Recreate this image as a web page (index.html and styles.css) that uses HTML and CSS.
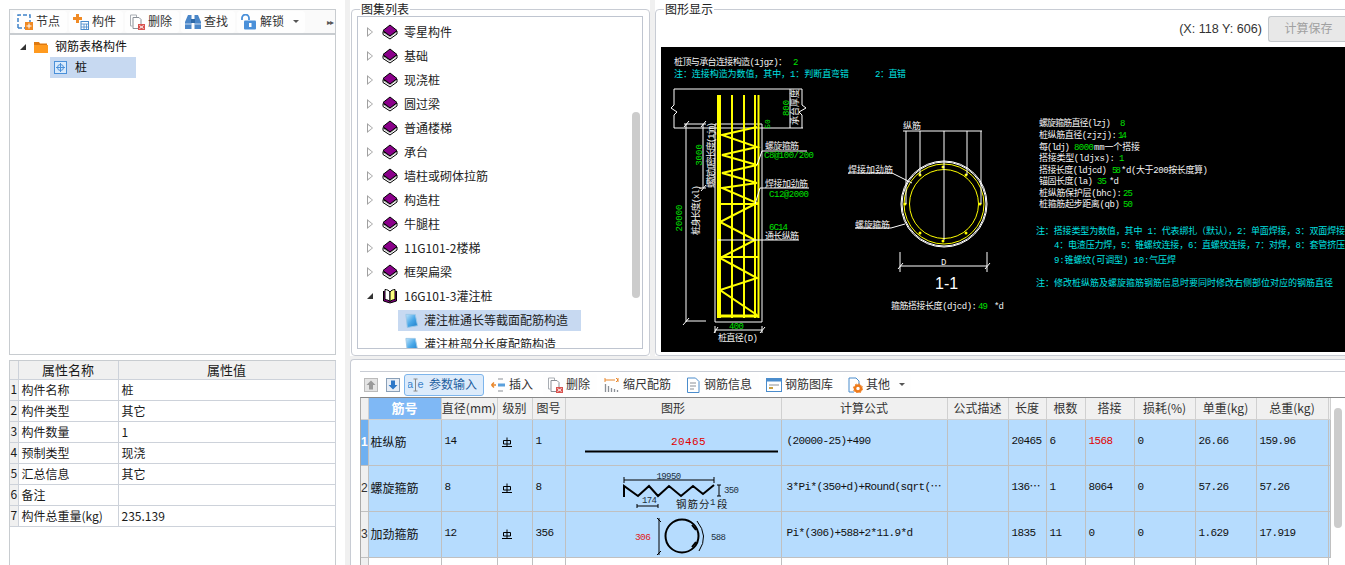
FILE: index.html
```html
<!DOCTYPE html>
<html lang="zh-CN">
<head>
<meta charset="utf-8">
<title>钢筋表格构件</title>
<link rel="stylesheet" href="styles.css">
</head>
<body>
<svg class="sprite" aria-hidden="true">
  <defs>
    <linearGradient id="paper" x1="0" y1="0" x2="1" y2="1">
      <stop offset="0" stop-color="#bfe4fb"/><stop offset=".5" stop-color="#4aa8e8"/><stop offset="1" stop-color="#1c7cc8"/>
    </linearGradient>
    <symbol id="book" viewBox="0 0 16 16">
      <path d="M1 7.500v3l7 4.500 7-5V7L8 12z" fill="#fff" stroke="#000"/>
      <path d="M1 6.500 8 1l7 5.500L8 12z" fill="#8a008a" stroke="#000"/>
      <path d="M2 9l6 4 6-4.500" fill="none" stroke="#888" stroke-width=".7"/>
    </symbol>
    <symbol id="openbook" viewBox="0 0 16 16">
      <path d="M1.500 3v10l6.500 2 6.500-2V3" fill="#800080" stroke="#000"/>
      <path d="M3 1.500c2 0 4 1 5 2.500v9.500c-1-1-3-2-5-2z" fill="#fff" stroke="#000"/>
      <path d="M13 1.500c-2 0-4 1-5 2.500v9.500c1-1 3-2 5-2z" fill="#ffff80" stroke="#000"/>
    </symbol>
    <symbol id="doc" viewBox="0 0 16 16">
      <path d="M2 1.500h10l2.500 12-11 2z" fill="url(#paper)" stroke="#9cc8e8"/>
    </symbol>
    <symbol id="grade" viewBox="0 0 12 12">
      <path d="M1 10.500h10M6 1.500v9M2.500 4.500h7v3.500h-7z" fill="none" stroke="#000"/>
    </symbol>
    <symbol id="del" viewBox="0 0 16 16">
      <path d="M4 3.500h6l2 2v5M4 3.500v11h5" fill="#fff" stroke="#8a8f96"/>
      <path d="M1.500 1v11h2M1.500 1h6v2" fill="none" stroke="#a8adb3"/>
      <rect x="9" y="10" width="7" height="6" fill="#d9534f"/>
      <path d="M10.500 11.500l4 3M14.500 11.500l-4 3" stroke="#fff"/>
    </symbol>
  </defs>
</svg>

<div class="app">
  <aside class="left">
    <div class="tbar">
      <div class="tbtn">
        <svg class="ico" viewBox="0 0 16 16"><path d="M1 14V1h12v7M1 14h7" fill="none" stroke="#3f83c9" stroke-width="1.500" stroke-dasharray="4 2"/><rect x="8" y="8" width="8" height="8" fill="#f08a24"/><path d="M12 9.500v5M9.500 12h5" stroke="#fff"/></svg>
        <span>节点</span>
      </div>
      <div class="tbtn">
        <svg class="ico" viewBox="0 0 16 16"><path d="M3 0h3v3h3v3H6v3H3V6H0V3h3z" fill="#f08a24"/><rect x="8" y="7.500" width="7.500" height="8" fill="#fff" stroke="#4a8ccc"/><path d="M8 10h8M8 13h8M11 10v6M13.500 10v6" stroke="#4a8ccc" stroke-width=".8"/></svg>
        <span>构件</span>
      </div>
      <div class="tbtn">
        <svg class="ico" viewBox="0 0 16 16"><use href="#del"/></svg>
        <span>删除</span>
      </div>
      <div class="tbtn">
        <svg class="ico" viewBox="0 0 16 16"><path d="M3 1h3.500v14H0V8zM9.500 1H13l3 7v7H9.500z" fill="#4a86c8"/><path d="M6 5h4v4H6z" fill="#2f6aa8"/><path d="M0 10h6.500M9.500 10H16" stroke="#fff" stroke-width=".7"/></svg>
        <span>查找</span>
      </div>
      <div class="tbtn">
        <svg class="ico" viewBox="0 0 16 16"><path d="M1 6V4a3.500 3.500 0 0 1 7 0v2" fill="none" stroke="#4a90d9" stroke-width="1.800"/><rect x="3" y="6.500" width="12" height="9" rx="1" fill="#4a90d9"/><rect x="8" y="9" width="2.500" height="4" fill="#fff"/></svg>
        <span>解锁</span>
        <i class="caret"></i>
      </div>
      <span class="more">▸▸</span>
    </div>

    <div class="ltree">
      <div class="lrow">
        <i class="tri-open"></i>
        <svg class="ico-folder" viewBox="0 0 14 12"><path d="M0 1h5l1 1.500h7V4H0z" fill="#e07a10"/><path d="M0 4h14v8H0z" fill="#ff9a1f"/></svg>
        <span>钢筋表格构件</span>
      </div>
      <div class="lrow lrow-sel">
        <svg class="ico-pile" viewBox="0 0 13 13"><rect x=".5" y=".5" width="12" height="12" fill="#d8eafc" stroke="#4a90d9"/><circle cx="6.500" cy="6.500" r="3" fill="none" stroke="#4a90d9"/><path d="M6.500 2v9M2 6.500h9" stroke="#4a90d9"/></svg>
        <span>桩</span>
      </div>
    </div>

    <div class="props">
      <table class="ptable">
        <colgroup><col class="pc0"><col class="pc1"><col class="pc2"></colgroup>
        <thead><tr><th></th><th>属性名称</th><th>属性值</th></tr></thead>
        <tbody>
          <tr><th>1</th><td>构件名称</td><td>桩</td></tr>
          <tr><th>2</th><td>构件类型</td><td>其它</td></tr>
          <tr><th>3</th><td>构件数量</td><td>1</td></tr>
          <tr><th>4</th><td>预制类型</td><td>现浇</td></tr>
          <tr><th>5</th><td>汇总信息</td><td>其它</td></tr>
          <tr><th>6</th><td>备注</td><td></td></tr>
          <tr><th>7</th><td>构件总重量(kg)</td><td>235.139</td></tr>
        </tbody>
      </table>
    </div>
  </aside>

  <section class="pane">
    <fieldset class="group group-mid">
      <legend>图集列表</legend>
      <div class="mtree">
        <div class="mrow"><i class="tri"></i><svg class="ico-book"><use href="#book"/></svg><span>零星构件</span></div>
        <div class="mrow"><i class="tri"></i><svg class="ico-book"><use href="#book"/></svg><span>基础</span></div>
        <div class="mrow"><i class="tri"></i><svg class="ico-book"><use href="#book"/></svg><span>现浇桩</span></div>
        <div class="mrow"><i class="tri"></i><svg class="ico-book"><use href="#book"/></svg><span>圆过梁</span></div>
        <div class="mrow"><i class="tri"></i><svg class="ico-book"><use href="#book"/></svg><span>普通楼梯</span></div>
        <div class="mrow"><i class="tri"></i><svg class="ico-book"><use href="#book"/></svg><span>承台</span></div>
        <div class="mrow"><i class="tri"></i><svg class="ico-book"><use href="#book"/></svg><span>墙柱或砌体拉筋</span></div>
        <div class="mrow"><i class="tri"></i><svg class="ico-book"><use href="#book"/></svg><span>构造柱</span></div>
        <div class="mrow"><i class="tri"></i><svg class="ico-book"><use href="#book"/></svg><span>牛腿柱</span></div>
        <div class="mrow"><i class="tri"></i><svg class="ico-book"><use href="#book"/></svg><span>11G101-2楼梯</span></div>
        <div class="mrow"><i class="tri"></i><svg class="ico-book"><use href="#book"/></svg><span>框架扁梁</span></div>
        <div class="mrow"><i class="tri-open"></i><svg class="ico-book"><use href="#openbook"/></svg><span>16G101-3灌注桩</span></div>
        <div class="mrow msub"><div class="msub-in msub-sel"><svg class="ico-doc"><use href="#doc"/></svg><span>灌注桩通长等截面配筋构造</span></div></div>
        <div class="mrow msub"><div class="msub-in"><svg class="ico-doc"><use href="#doc"/></svg><span>灌注桩部分长度配筋构造</span></div></div>
        <i class="vscroll vscroll-mid"></i>
      </div>
    </fieldset>
  </section>

  <section class="pane">
    <fieldset class="group group-right">
      <legend>图形显示</legend>
      <div class="dhead">
        <span class="coords">(X: 118 Y: 606)</span>
        <span class="savebtn">计算保存</span>
      </div>
      <svg class="canvas" viewBox="661 47 684 305">
        <text class="w" x="674" y="65" textLength="113">桩顶与承台连接构造(1jgz)：</text>
        <text class="g" x="793" y="65">2</text>
        <text class="c" x="674" y="77" textLength="175">注：连接构造为数值，其中，1：判断直弯错</text>
        <text class="c" x="875" y="77" textLength="31">2：直错</text>

        <path class="lw" d="M674 89H802M674 89V105L671 108L677 112L674 115V128M674 128H790M802 89V105L806 108L799 112L802 115V128M790 89V128H803"/>
        <path class="lw" d="M715 322V124H762V322ZM686 124V322M703 124V188M684 124H706M686 321H706M699 188H706"/>
        <path class="lw" d="M683 325L689 318M701 127L706 121M684 127L689 121M701 191L706 185"/>

        <path class="ly b4" d="M719 95V318"/>
        <path class="ly b2" d="M732 95V318M744 95V318M755 95V318M758.500 95V318"/>
        <path class="ly b2" d="M757 127L722 135L757 147L722 155L757 165L722 173L757 183L722 188L757 203L720 222L755 240L720 258L757 278L720 290L757 315M720 204H758M720 257H758"/>
        <path class="ly b3" d="M718 316H758"/>

        <text class="g rot" transform="rotate(-90 702 155)" x="702" y="155">3000</text>
        <text class="g rot" transform="rotate(-90 789 108)" x="789" y="108">800</text>
        <text class="g rot small" transform="rotate(-90 770 124)" x="770" y="124">50</text>
        <text class="w rot" transform="rotate(-90 798 107)" x="798" y="107">承台厚度</text>
        <text class="w rot" transform="rotate(-90 714 155)" x="714" y="155" textLength="66">螺旋加密长度(1jm)</text>
        <text class="w rot" transform="rotate(-90 699 210)" x="699" y="210" textLength="50">桩身长度(xl)</text>
        <text class="g rot" transform="rotate(-90 682 218)" x="682" y="218">20000</text>

        <text class="w" x="765" y="149" textLength="34">螺旋箍筋</text>
        <path class="lw" d="M762 151H807M762 151L757 165"/>
        <text class="g" x="764" y="158" textLength="50">C8@100/200</text>
        <text class="w" x="765" y="187" textLength="43">焊接加劲筋</text>
        <path class="lw" d="M760 188H809M760 188L755 204"/>
        <text class="g" x="769" y="197" textLength="40">C12@2000</text>
        <text class="g" x="769" y="230" textLength="19">6C14</text>
        <text class="w" x="765" y="239" textLength="34">通长纵筋</text>
        <path class="lw" d="M718 240H799"/>

        <text class="g" x="729" y="329" textLength="15">400</text>
        <path class="lw" d="M715 330H762M714 333L718 327M760 333L765 327M715 326V333M762 326V333"/>
        <text class="w" x="718" y="341" textLength="40">桩直径(D)</text>

        <circle class="lw" cx="944" cy="204" r="43"/>
        <circle class="lw" cx="944" cy="204" r="42"/>
        <circle class="ly" cx="944" cy="204" r="40"/>
        <circle class="ly" cx="944" cy="204" r="34.500"/>
        <g class="dots">
          <circle cx="943" cy="167" r="1.500"/><circle cx="966" cy="175" r="1.500"/><circle cx="980" cy="204" r="1.500"/><circle cx="966" cy="233" r="1.500"/>
          <circle cx="943" cy="241" r="1.500"/><circle cx="920" cy="233" r="1.500"/><circle cx="905" cy="204" r="1.500"/><circle cx="920" cy="175" r="1.500"/>
        </g>
        <path class="lw" d="M903 131H982M906 131V204M920 131V175M944 131V240M967 131V175M981 131V204"/>
        <text class="w" x="903" y="129" textLength="18">纵筋</text>
        <text class="w" x="848" y="173" textLength="45">焊接加劲筋</text>
        <path class="lw" d="M848 173H892L912 183"/>
        <text class="w" x="855" y="228" textLength="35">螺旋箍筋</text>
        <path class="lw" d="M855 228H891L905 224"/>
        <path class="lw" d="M900 252V272M987 252V272M900 266H987M898 269L903 263M985 269L990 263"/>
        <text class="w" x="941" y="265">D</text>
        <text class="big" x="935" y="289">1-1</text>
        <text class="w" x="891" y="309" textLength="86">箍筋搭接长度(djcd):</text>
        <text class="g" x="978" y="309" textLength="10">49</text>
        <text class="w" x="994" y="309" textLength="10">*d</text>

        <text class="w" x="1039" y="126" textLength="72">螺旋箍筋直径(lzj)</text><text class="g" x="1120" y="126">8</text>
        <text class="w" x="1039" y="138" textLength="78">桩纵筋直径(zjzj):</text><text class="g" x="1118" y="138" textLength="9">14</text>
        <text class="w" x="1039" y="150" textLength="31">每(ldj)</text><text class="g" x="1074" y="150" textLength="20">8000</text><text class="w" x="1094" y="150" textLength="46">mm一个搭接</text>
        <text class="w" x="1039" y="161" textLength="76">搭接类型(ldjxs):</text><text class="g" x="1119" y="161">1</text>
        <text class="w" x="1039" y="173" textLength="68">搭接长度(ldjcd)</text><text class="g" x="1112" y="173" textLength="9">58</text><text class="w" x="1121" y="173" textLength="87">*d(大于200按长度算)</text>
        <text class="w" x="1039" y="184" textLength="54">锚固长度(la)</text><text class="g" x="1097" y="184" textLength="10">35</text><text class="w" x="1109" y="184" textLength="10">*d</text>
        <text class="w" x="1039" y="196" textLength="83">桩纵筋保护层(bhc):</text><text class="g" x="1123" y="196" textLength="10">25</text>
        <text class="w" x="1039" y="207" textLength="81">桩箍筋起步距离(qb)</text><text class="g" x="1123" y="207" textLength="10">50</text>

        <text class="c" x="1036" y="234" textLength="309">注：搭接类型为数值，其中 1：代表绑扎（默认），2：单面焊接，3：双面焊接</text>
        <text class="c" x="1054" y="248" textLength="291">4：电渣压力焊，5：锥螺纹连接，6：直螺纹连接，7：对焊，8：套管挤压</text>
        <text class="c" x="1054" y="263" textLength="122">9:锥螺纹(可调型)  10:气压焊</text>
        <text class="c" x="1036" y="286" textLength="297">注：修改桩纵筋及螺旋箍筋钢筋信息时要同时修改右侧部位对应的钢筋直径</text>
      </svg>
    </fieldset>
  </section>

  <section class="bottom">
    <div class="bbar">
      <svg class="arrow" viewBox="0 0 14 14"><rect x=".5" y=".5" width="13" height="13" fill="#e4e4e4" stroke="#bbb"/><path d="M7 2.500 11.500 7H9v4.500H5V7H2.500z" fill="#9a9a9a"/></svg>
      <svg class="arrow" viewBox="0 0 14 14"><rect x=".5" y=".5" width="13" height="13" fill="#e8eef6" stroke="#8aa0b8"/><path d="M7 11.500 2.500 7H5V2.500h4V7h2.500z" fill="#2e78c8"/></svg>
      <div class="tbtn tbtn-on">
        <svg class="ico" viewBox="0 0 16 16"><text class="icotxt" x="-1" y="11">a</text><path d="M7.500 2v12M5.500 2h4M5.500 14h4" stroke="#888" fill="none"/><text class="icotxt" x="9.500" y="11">e</text></svg>
        <span class="gap5">参数输入</span>
      </div>
      <div class="tbtn">
        <svg class="ico" viewBox="0 0 16 16"><path d="M6 5H1.500M1.500 5l2.500-2.500M1.500 5l2.500 2.500" fill="none" stroke="#e8862a" stroke-width="1.500" transform="translate(0 3)"/><path d="M8 2h5M8 14h5" stroke="#8a8f96"/><rect x="8" y="6.500" width="7" height="3" fill="#5aa0dc"/></svg>
        <span>插入</span>
      </div>
      <div class="tbtn">
        <svg class="ico" viewBox="0 0 16 16"><use href="#del"/></svg>
        <span>删除</span>
      </div>
      <div class="tbtn">
        <svg class="ico" viewBox="0 0 16 16"><path d="M1 1v4M1 3h10M14 1v4" stroke="#e8862a" fill="none"/><path d="M12 1l2 2-2 2" stroke="#e8862a" fill="none"/><path d="M1.500 7v8M4.500 9v6M7.500 11v4M10.500 12v3M13.500 13v2" stroke="#8a8f96" stroke-width="1.300"/></svg>
        <span>缩尺配筋</span>
      </div>
      <div class="tbtn">
        <svg class="ico" viewBox="0 0 16 16"><path d="M2.500 1h8l3.500 3.500v11h-11.500z" fill="#fff" stroke="#4a8ccc"/><path d="M5 6h6M5 9h6M5 12h4" stroke="#8a8f96"/></svg>
        <span>钢筋信息</span>
      </div>
      <div class="tbtn">
        <svg class="ico" viewBox="0 0 16 16"><rect x=".5" y="1.500" width="15" height="13" fill="#fff" stroke="#4a8ccc"/><rect x=".5" y="1.500" width="15" height="3" fill="#4a8ccc"/><path d="M3 8h10" stroke="#8a8f96"/><path d="M3 11h4" stroke="#c8a040" stroke-width="2"/></svg>
        <span>钢筋图库</span>
      </div>
      <div class="tbtn">
        <svg class="ico" viewBox="0 0 16 16"><path d="M2 1h7l3 3v5M2 1v14h5" fill="#fff" stroke="#4a8ccc"/><circle cx="11" cy="11.500" r="3" fill="none" stroke="#ee7a1a" stroke-width="2.500"/><circle cx="11" cy="11.500" r="4.600" fill="none" stroke="#ee7a1a" stroke-dasharray="1.800 1.800"/></svg>
        <span>其他</span>
        <i class="caret"></i>
      </div>
    </div>

    <div class="gridwrap">
      <table class="grid">
        <colgroup>
          <col class="c-h"><col class="c-no"><col class="c-dia"><col class="c-lv"><col class="c-fig"><col class="c-shape"><col class="c-calc"><col class="c-desc"><col class="c-len"><col class="c-cnt"><col class="c-lap"><col class="c-loss"><col class="c-unit"><col class="c-total"><col class="c-end">
        </colgroup>
        <thead>
          <tr>
            <th class="hh"></th><th class="hsel">筋号</th><th>直径(mm)</th><th>级别</th><th>图号</th><th>图形</th><th>计算公式</th><th>公式描述</th><th>长度</th><th>根数</th><th>搭接</th><th>损耗(%)</th><th>单重(kg)</th><th>总重(kg)</th><th></th>
          </tr>
        </thead>
        <tbody>
          <tr class="on">
            <th class="rh rh-sel">1</th><td class="cn">桩纵筋</td><td>14</td><td><svg class="grade"><use href="#grade"/></svg></td><td>1</td>
            <td class="shape">
              <svg class="shape-svg" viewBox="565 419 216 45">
                <text class="sred" x="687.500" y="444" text-anchor="middle">20465</text>
                <path class="sbar" d="M584 450.500H777"/>
              </svg>
            </td>
            <td class="calc">(20000-25)+490</td><td></td><td>20465</td><td>6</td><td class="red">1568</td><td>0</td><td>26.66</td><td>159.96</td><td></td>
          </tr>
          <tr class="on">
            <th class="rh">2</th><td class="cn">螺旋箍筋</td><td>8</td><td><svg class="grade"><use href="#grade"/></svg></td><td>8</td>
            <td class="shape">
              <svg class="shape-svg" viewBox="565 465 216 45">
                <text class="stxt" x="667.500" y="478" text-anchor="middle">19950</text>
                <path class="sthin" d="M623 479H713M623 476V482M713 476V482"/>
                <path class="sthick" d="M623 496V485L637 495L648 485L657 495L668 485L680 495L692 485L702 493L713 484"/>
                <path class="sthin" d="M718 484V495M716 484H720M716 495H720"/>
                <text class="stxt" x="723" y="492">350</text>
                <text class="stxt" x="641" y="502">174</text>
                <path class="sthin" d="M636 505H657M636 503V507M657 503V507"/>
                <text class="scn" x="675" y="507">钢筋分</text><text class="stxt" x="709" y="504">1</text><text class="scn" x="716" y="507">段</text>
              </svg>
            </td>
            <td class="calc">3*Pi*(350+d)+Round(sqrt(⋯</td><td></td><td>136⋯</td><td>1</td><td>8064</td><td>0</td><td>57.26</td><td>57.26</td><td></td>
          </tr>
          <tr class="on">
            <th class="rh">3</th><td class="cn">加劲箍筋</td><td>12</td><td><svg class="grade"><use href="#grade"/></svg></td><td>356</td>
            <td class="shape">
              <svg class="shape-svg" viewBox="565 511 216 45">
                <text class="sred2" x="634" y="539">306</text>
                <path class="sthin" d="M658 517V554M656 517L660 521M656 554L660 550"/>
                <circle class="sthick" cx="681" cy="535" r="16.500"/>
                <path class="sthick" d="M691 524L695 529M691 546L695 541"/>
                <path class="sthin" d="M696 520Q708 535 698 550"/>
                <text class="stxt" x="710" y="539">588</text>
              </svg>
            </td>
            <td class="calc">Pi*(306)+588+2*11.9*d</td><td></td><td>1835</td><td>11</td><td>0</td><td>0</td><td>1.629</td><td>17.919</td><td></td>
          </tr>
          <tr>
            <th class="rh"></th><td></td><td></td><td></td><td></td><td></td><td></td><td></td><td></td><td></td><td></td><td></td><td></td><td></td><td class="noline"></td>
          </tr>
        </tbody>
      </table>
      <i class="vscroll vscroll-grid"></i>
    </div>
  </section>
</div>
</body>
</html>
```
FILE: styles.css
```css
* { box-sizing: border-box; }
html, body { margin: 0; padding: 0; }
body {
  width: 1345px;
  height: 565px;
  overflow: hidden;
  font: 12px/1.2 "Noto Sans CJK SC", "Liberation Sans", sans-serif;
  color: #1a1a1a;
}
i { display: block; }
.sprite { position: absolute; width: 0; height: 0; }

.app {
  display: grid;
  grid-template-columns: 345px 300px 690px;
  grid-template-rows: 356px 206px;
  column-gap: 5px;
  row-gap: 3px;
  width: 1345px;
  height: 565px;
  overflow: hidden;
  background: #f0f0f0;
}

/* left */
.left {
  grid-row: 1 / 3;
  display: flex;
  flex-direction: column;
  padding: 9px 9px 0;
  background: #fff;
  height: 565px;
}
.tbar {
  display: flex;
  align-items: center;
  gap: 2px;
  flex: none;
  height: 26px;
  padding-left: 3px;
  background: #fafafa;
  border: 1px solid #c8ccd0;
  border-bottom-width: 2px;
}
.tbtn {
  display: flex;
  align-items: center;
  gap: 3px;
  height: 22px;
  padding: 0 7px 0 4px;
  background: #fefefe;
  border-radius: 3px;
  color: #333;
  white-space: nowrap;
}
.ico { width: 16px; height: 16px; flex: none; }
.caret {
  width: 0;
  height: 0;
  margin: 0 -1px 0 6px;
  border: 3px solid transparent;
  border-top: 3px solid #555;
  border-bottom: 0;
}
.more { margin-left: auto; margin-right: 2px; font-size: 8px; letter-spacing: -1px; color: #555; }
.ltree {
  flex: none;
  height: 320px;
  padding-top: 1px;
  border: 1px solid #c8ccd0;
  border-top: 0;
}
.lrow {
  display: flex;
  align-items: center;
  height: 21px;
  padding-left: 10px;
  color: #111;
}
.tri-open {
  width: 0;
  height: 0;
  flex: none;
  border-style: solid;
  border-width: 0 0 6px 6px;
  border-color: transparent transparent #333 transparent;
}
.ico-folder { width: 14px; height: 12px; margin: 0 7px 0 8px; flex: none; }
.lrow-sel {
  width: 86px;
  margin-left: 40px;
  padding-left: 4px;
  background: #c7d9f1;
}
.ico-pile { width: 13px; height: 13px; margin-right: 8px; flex: none; }
.props {
  flex: none;
  height: 205px;
  margin-top: 5px;
  border: 1px solid #c8ccd0;
  border-bottom: 0;
}
.ptable {
  width: 325px;
  table-layout: fixed;
  border-collapse: collapse;
}
.pc0 { width: 8px; }
.pc1 { width: 100px; }
.pc2 { width: 217px; }
.ptable thead th {
  height: 18px;
  padding: 0;
  font-size: 13px;
  font-weight: 400;
  line-height: 14px;
  background: #f0f0f0;
  border: 1px solid #cdd2da;
  border-top: 0;
  border-left: 0;
}
.ptable tbody th {
  padding: 0;
  font-weight: 400;
  background: #f0f0f0;
  border-bottom: 1px solid #cdd2da;
  text-align: center;
}
.ptable td {
  height: 21px;
  padding: 0 3px;
  border: 1px solid #cdd2da;
  border-top: 0;
  line-height: 14px;
  white-space: nowrap;
}

/* group boxes */
.pane { background: #fff; overflow: hidden; }
.group {
  display: block;
  min-width: 0;
  height: 354px;
  margin: 2px 0 0;
  padding: 0 6px 6px 5px;
  background: #fff;
  border: 1px solid #c8ccd4;
  border-radius: 4px;
}
.group legend {
  margin-left: 3px;
  padding: 0 1px;
  line-height: 14px;
  color: #222;
}
.group-mid { margin-left: 1px; width: 299px; }
.group-right { width: 700px; padding: 0 0 3px 5px; }

.mtree {
  position: relative;
  height: 333px;
  padding-top: 3px;
  overflow: hidden;
  border: 1px solid #bfc5d0;
}
.mrow {
  display: flex;
  align-items: center;
  height: 24px;
  padding-left: 9px;
  white-space: nowrap;
  color: #222;
}
.tri {
  width: 0;
  height: 0;
  flex: none;
  position: relative;
  border-style: solid;
  border-width: 5px 0 5px 6px;
  border-color: transparent transparent transparent #a0a0a0;
}
.tri::after {
  content: "";
  position: absolute;
  left: -5px;
  top: -3px;
  border-style: solid;
  border-width: 3px 0 3px 4px;
  border-color: transparent transparent transparent #fff;
}
.ico-book { width: 16px; height: 16px; margin: 0 6px 0 9px; flex: none; }
.msub { padding-left: 40px; }
.msub-in {
  display: flex;
  align-items: center;
  width: 183px;
  height: 21px;
  padding-left: 6px;
}
.msub-sel { background: #c7d9f1; }
.ico-doc { width: 15px; height: 15px; margin-right: 5px; flex: none; }
.vscroll {
  position: absolute;
  width: 8px;
  background: #ccc;
  border-radius: 4px;
}
.vscroll-mid { left: 274px; top: 95px; height: 186px; }
.vscroll-grid { left: 973px; top: 10px; height: 120px; }

/* drawing */
.dhead {
  display: flex;
  align-items: center;
  justify-content: flex-end;
  gap: 6px;
  width: 684px;
  height: 31px;
  padding-bottom: 6px;
}
.coords { font: 12.600px "Liberation Sans", sans-serif; color: #333; }
.savebtn {
  flex: none;
  display: flex;
  align-items: center;
  justify-content: center;
  width: 77px;
  height: 26px;
  padding-left: 3px;
  color: #a0a0a0;
  background: #e8e8e8;
  border: 1px solid #c4c8cc;
  border-right: 0;
  border-radius: 3px 0 0 3px;
}
.canvas { display: block; width: 684px; height: 305px; background: #000; }
.canvas text { font: 9px "Liberation Mono", "Noto Sans CJK SC", monospace; }
.canvas .small { font-size: 8px; }
.canvas .w { fill: #f4f4f4; }
.canvas .g { fill: #00e000; }
.canvas .c { fill: #00e0e0; }
.canvas .rot { text-anchor: middle; }
.canvas .big { font: 16px "Liberation Sans", sans-serif; fill: #fff; }
.lw { fill: none; stroke: #fff; stroke-width: 1; }
.ly { fill: none; stroke: #ff0; stroke-width: 1; }
.b2 { stroke-width: 2; }
.b3 { stroke-width: 3; }
.b4 { stroke-width: 4; }
.dots { fill: #ff0; }

/* bottom */
.bottom {
  grid-column: 2 / 4;
  height: 207px;
  padding: 11px 0 0 9px;
  background: #fff;
  border: 1px solid #c8ccd4;
  border-right: 0;
  border-radius: 4px 0 0 0;
}
.bbar {
  display: flex;
  align-items: center;
  gap: 3px;
  height: 26px;
  padding-left: 4px;
  border-top: 1px solid #c8ccd4;
}
.arrow { width: 14px; height: 14px; margin-right: 5px; flex: none; }
.arrow + .arrow { margin-right: 1px; }
.tbtn-on {
  background: #dcebfb;
  border: 1px solid #7db5ec;
  padding: 0 6px 0 3px;
  color: #1f5f9f;
  margin-right: -1px;
}
.gap5 { margin-left: 2px; }
.icotxt { font: 11px "Liberation Sans", sans-serif; fill: #3f83c9; }
.gridwrap {
  position: relative;
  height: 169px;
  overflow: hidden;
  border-top: 1px solid #888;
  border-left: 1px solid #aaa;
}
.grid {
  width: 969px;
  table-layout: fixed;
  border-collapse: collapse;
  font: 11px/1.2 "Liberation Mono", "Noto Sans CJK SC", monospace;
  letter-spacing: -.6px;
  color: #111;
}
.c-h { width: 7px; }
.c-no { width: 73px; }
.c-dia { width: 56px; }
.c-lv { width: 35px; }
.c-fig { width: 33px; }
.c-shape { width: 216px; }
.c-calc { width: 166px; }
.c-desc { width: 61px; }
.c-len { width: 38px; }
.c-cnt { width: 39px; }
.c-lap { width: 49px; }
.c-loss { width: 61px; }
.c-unit { width: 61px; }
.c-total { width: 72px; }
.c-end { width: 2px; }
.grid thead th {
  height: 21px;
  padding: 0;
  font: 400 12px/14px "Noto Sans CJK SC", sans-serif;
  letter-spacing: 0;
  color: #333;
  background: #f0f0f0;
  border: 1px solid #d0d0d0;
  border-top: 0;
  white-space: nowrap;
}
.grid thead .hh { border-left: 0; }
.grid thead .hsel {
  font-size: 13px;
  font-weight: 700;
  color: #fff;
  background: #7fb8f5;
}
.grid td {
  height: 46px;
  padding: 0 3px;
  border: 1px solid #c0c0c0;
  white-space: nowrap;
  overflow: hidden;
}
.grid .on td { background: #b6dcfe; }
.grid td.cn {
  padding-left: 2px;
  font: 12px/1.2 "Noto Sans CJK SC", sans-serif;
  letter-spacing: 0;
}
.grid td.calc { padding-left: 5px; }
.grid td.shape { padding: 0; }
.grid td.red { color: #e00000; }
.grid td.noline { border: 0; }
.rh {
  padding: 0;
  font: 400 12px/1 "Liberation Sans", sans-serif;
  letter-spacing: 0;
  text-align: center;
  color: #333;
  background: #f0f0f0;
  border: 1px solid #c0c0c0;
  border-left: 0;
  overflow: hidden;
}
.rh-sel { background: #6fb0f0; color: #fff; font-weight: 700; }
.grade { display: block; width: 12px; height: 12px; }
.shape-svg { display: block; width: 216px; height: 45px; }
.sred { font: 11px "Liberation Mono", monospace; fill: #e00000; letter-spacing: .4px; }
.sred2 { font: 9.500px "Liberation Mono", monospace; fill: #e02020; }
.stxt { font: 9px "Liberation Mono", monospace; fill: #203040; }
.scn { font: 10.500px "Noto Sans CJK SC", sans-serif; fill: #222; letter-spacing: 1px; }
.sbar { stroke: #000; stroke-width: 2; fill: none; }
.sthin { stroke: #000; stroke-width: 1; fill: none; }
.sthick { stroke: #000; stroke-width: 2; fill: none; }
```
